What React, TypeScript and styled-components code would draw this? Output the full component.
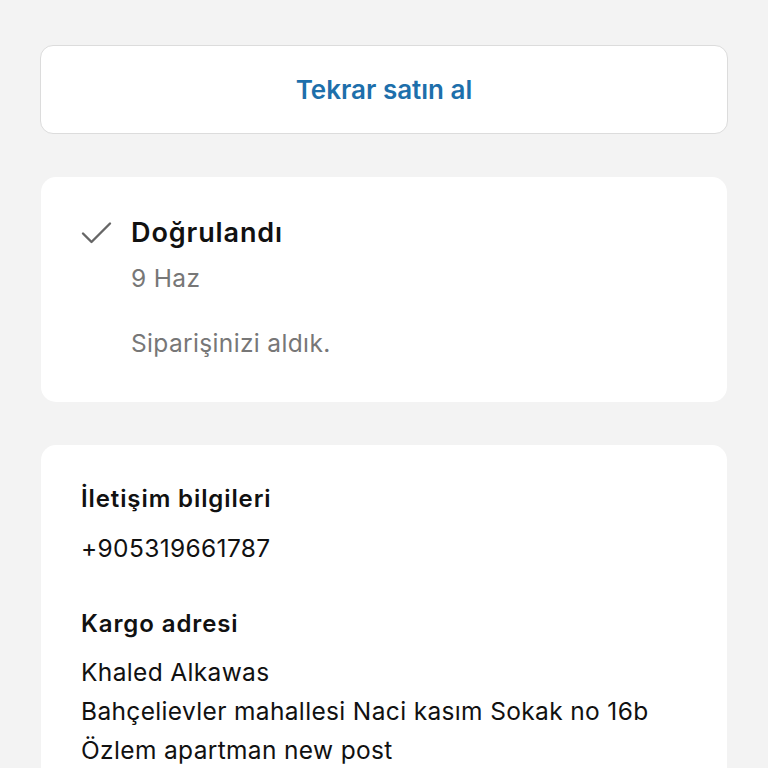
import React from "react";
import styled, { createGlobalStyle } from "styled-components";

const GlobalStyle = createGlobalStyle`
  html, body {
    margin: 0;
    padding: 0;
    background: #f3f3f3;
    font-family: Inter, "Noto Sans", "Liberation Sans", sans-serif;
    -webkit-font-smoothing: antialiased;
  }
`;

const Page = styled.div`
  box-sizing: border-box;
  padding: 45px 40px 0 40px;
  display: flex;
  flex-direction: column;
  gap: 43px;
  min-height: 768px;
`;

const ActionButton = styled.button`
  box-sizing: border-box;
  width: 100%;
  height: 89px;
  background: #fff;
  border: 1px solid #dcdcdc;
  border-radius: 13px;
  color: #1d6fab;
  font-family: inherit;
  font-size: 26px;
  font-weight: 600;
  cursor: pointer;
`;

const Card = styled.section<{ $open?: boolean }>`
  box-sizing: border-box;
  margin: 0 1px;
  background: #fff;
  border-radius: ${(p) => (p.$open ? "15px 15px 0 0" : "15px")};
  padding: ${(p) => (p.$open ? "38px 40px 20px" : "38px 40px 43px")};
`;

const StatusRow = styled.div`
  display: grid;
  grid-template-columns: 50px 1fr;
  align-items: center;
`;

const StatusTitle = styled.h2`
  margin: 0;
  font-size: 27px;
  font-weight: 600;
  letter-spacing: 0.9px;
  color: #111;
  line-height: 36px;
`;

const Muted = styled.p<{ $gap?: number }>`
  margin: ${(p) => p.$gap ?? 0}px 0 0 50px;
  font-size: 24.5px;
  letter-spacing: 0.35px;
  color: #777;
  line-height: 32px;
`;

const Label = styled.h3<{ $gap?: number }>`
  margin: ${(p) => p.$gap ?? 0}px 0 0;
  font-size: 24px;
  font-weight: 600;
  letter-spacing: 0.9px;
  color: #111;
  line-height: 32px;
`;

const Line = styled.p<{ $gap?: number }>`
  margin: ${(p) => p.$gap ?? 0}px 0 0;
  font-size: 24.5px;
  letter-spacing: 0.35px;
  color: #111;
  line-height: 39px;
`;

const Check = () => (
  <svg width="32" height="24" viewBox="0 0 32 24" fill="none">
    <path d="M2 12.5 L10.5 21 L29 2.5" stroke="#666" strokeWidth="2.4" strokeLinecap="round" strokeLinejoin="round" />
  </svg>
);

export default function App() {
  return (
    <>
      <GlobalStyle />
      <Page>
        <ActionButton>Tekrar satın al</ActionButton>
        <Card>
          <StatusRow>
            <Check />
            <StatusTitle>Doğrulandı</StatusTitle>
          </StatusRow>
          <Muted $gap={11}>9 Haz</Muted>
          <Muted $gap={33}>Siparişinizi aldık.</Muted>
        </Card>
        <Card $open>
          <Label>İletişim bilgileri</Label>
          <Line $gap={14}>+905319661787</Line>
          <Label $gap={40}>Kargo adresi</Label>
          <Line $gap={13}>Khaled Alkawas</Line>
          <Line>Bahçelievler mahallesi Naci kasım Sokak no 16b</Line>
          <Line>Özlem apartman new post</Line>
        </Card>
      </Page>
    </>
  );
}
